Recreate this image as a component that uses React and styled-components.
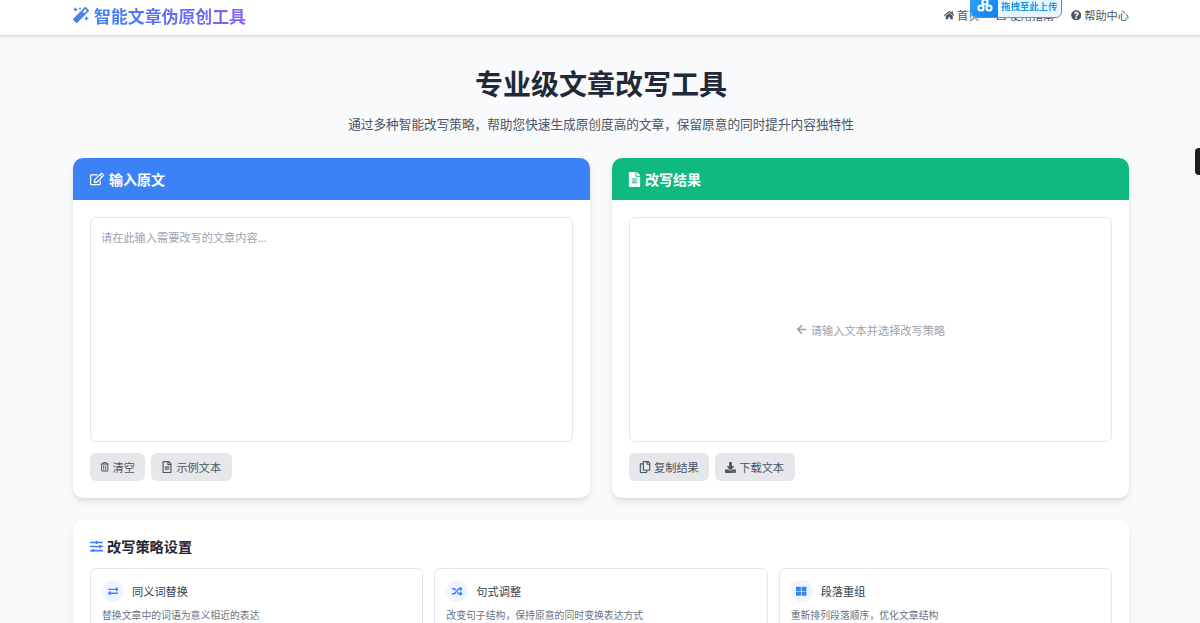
import React from "react";
import styled, { createGlobalStyle } from "styled-components";
import {
  FaMagic,
  FaHome,
  FaBook,
  FaQuestionCircle,
  FaRegEdit,
  FaFileAlt,
  FaRegTrashAlt,
  FaRegFileAlt,
  FaRegCopy,
  FaDownload,
  FaSlidersH,
  FaExchangeAlt,
  FaRandom,
  FaThLarge,
  FaArrowLeft,
} from "react-icons/fa";

const GlobalStyle = createGlobalStyle`
  html, body {
    margin: 0;
    height: 100%;
    overflow: hidden;
    background: #f8fafc;
    font-family: "Noto Sans CJK SC", "Liberation Sans", sans-serif;
    color: #1f2937;
  }
  * { box-sizing: border-box; }
`;

const Header = styled.header`
  height: 35px;
  background: #fff;
  box-shadow: 0 1px 3px rgba(0, 0, 0, 0.2);
  padding: 0 71px 5px 73px;
  display: flex;
  align-items: center;
  justify-content: space-between;
`;

const Logo = styled.div`
  display: flex;
  align-items: center;
  gap: 5px;
  font-size: 16.9px;
  font-weight: 700;
  svg {
    color: #4a80ea;
    font-size: 16px;
  }
`;

const LogoText = styled.span`
  background: linear-gradient(90deg, #3b82f6, #8b5cf6);
  -webkit-background-clip: text;
  background-clip: text;
  color: transparent;
`;

const Nav = styled.nav`
  display: flex;
  gap: 16.5px;
`;

const NavLink = styled.a`
  display: flex;
  align-items: center;
  gap: 3px;
  font-size: 11.2px;
  color: #4b5563;
  svg {
    font-size: 10.5px;
  }
`;

const UploadWidget = styled.div`
  position: fixed;
  top: -10px;
  left: 970px;
  width: 92px;
  height: 28px;
  display: flex;
  border: 1px solid #2f9df4;
  border-radius: 6px;
  overflow: hidden;
  background: #e9f5fe;
`;

const UploadIcon = styled.div`
  width: 27px;
  background: linear-gradient(135deg, #2fa8fb, #0f7fee);
  display: flex;
  align-items: flex-end;
  justify-content: center;
  padding-bottom: 5px;
`;

const UploadText = styled.div`
  flex: 1;
  display: flex;
  align-items: flex-end;
  justify-content: center;
  padding-bottom: 4px;
  font-size: 9.4px;
  line-height: 14px;
  font-weight: 700;
  color: #1a96ee;
`;

const Main = styled.main`
  padding: 0 71px 0 73px;
`;

const Hero = styled.div`
  text-align: center;
  padding-top: 28px;
`;

const Title = styled.h1`
  margin: 0;
  font-size: 28px;
  line-height: 40px;
  font-weight: 700;
  color: #1f2937;
`;

const Subtitle = styled.p`
  margin: 11px 0 0;
  font-size: 12.65px;
  line-height: 20px;
  color: #4b5563;
`;

const Columns = styled.div`
  display: grid;
  grid-template-columns: 517px 517px;
  gap: 22px;
  margin-top: 24px;
`;

const Card = styled.section`
  height: 340px;
  background: #fff;
  border-radius: 10px;
  overflow: hidden;
  box-shadow: 0 4px 8px -1px rgba(0, 0, 0, 0.1), 0 2px 4px -1px rgba(0, 0, 0, 0.06);
`;

const CardHead = styled.div`
  height: 42px;
  padding: 0 17px 0 ${(p) => p.$pad}px;
  display: flex;
  align-items: center;
  gap: ${(p) => p.$gap}px;
  background: ${(p) => p.$color};
  color: #fff;
  font-size: 14px;
  font-weight: 700;
  svg {
    font-size: ${(p) => p.$icon}px;
  }
`;

const CardBody = styled.div`
  padding: 17px;
`;

const Input = styled.textarea`
  display: block;
  width: 100%;
  height: 225px;
  padding: 10px;
  border: 1px solid #e5e7eb;
  border-radius: 6px;
  resize: none;
  outline: none;
  font-family: inherit;
  font-size: 11.2px;
  line-height: 18px;
  &::placeholder {
    color: #9ca3af;
  }
`;

const Output = styled.div`
  height: 225px;
  border: 1px solid #e5e7eb;
  border-radius: 6px;
  display: flex;
  align-items: center;
  justify-content: center;
  gap: 4px;
  font-size: 11.2px;
  color: #9ca3af;
  svg {
    font-size: 11px;
  }
`;

const Actions = styled.div`
  display: flex;
  gap: 6px;
  margin-top: 11px;
`;

const Button = styled.button`
  height: 28px;
  padding: 0 10.5px 0 10px;
  display: flex;
  align-items: center;
  gap: 3px;
  border: 0;
  border-radius: 6px;
  background: #e5e7eb;
  color: #4b5563;
  font-family: inherit;
  font-size: 11.2px;
  svg {
    font-size: ${(p) => p.$icon}px;
  }
`;

const Settings = styled.section`
  margin-top: 22px;
  padding: 16px 17px 17px;
  background: #fff;
  border-radius: 10px;
  box-shadow: 0 4px 8px -1px rgba(0, 0, 0, 0.1);
`;

const SettingsTitle = styled.h2`
  margin: 0;
  display: flex;
  align-items: center;
  gap: 4px;
  font-size: 14.2px;
  line-height: 20px;
  font-weight: 700;
  color: #1f2937;
  svg {
    color: #3b82f6;
    font-size: 13px;
  }
`;

const Strategies = styled.div`
  display: grid;
  grid-template-columns: repeat(3, 1fr);
  gap: 11px;
  margin-top: 12px;
`;

const Strategy = styled.div`
  height: 100px;
  padding: 11px;
  border: 1px solid #e5e7eb;
  border-radius: 6px;
`;

const StrategyHead = styled.div`
  display: flex;
  align-items: center;
  gap: 8px;
  font-size: 11.2px;
  color: #374151;
`;

const IconCircle = styled.span`
  width: 22px;
  height: 22px;
  border-radius: 50%;
  background: #eff4fe;
  color: #3b82f6;
  display: flex;
  align-items: center;
  justify-content: center;
  font-size: 10.5px;
`;

const StrategyDesc = styled.p`
  margin: 6px 0 0;
  font-size: 9.85px;
  line-height: 14px;
  color: #6b7280;
`;

const SidePill = styled.div`
  position: fixed;
  right: 0;
  top: 148px;
  width: 5px;
  height: 27px;
  background: #1f1f1f;
  border-radius: 4px 0 0 4px;
`;

const strategies = [
  { icon: <FaExchangeAlt />, name: "同义词替换", desc: "替换文章中的词语为意义相近的表达" },
  { icon: <FaRandom />, name: "句式调整", desc: "改变句子结构，保持原意的同时变换表达方式" },
  { icon: <FaThLarge />, name: "段落重组", desc: "重新排列段落顺序，优化文章结构" },
];

export default function App() {
  return (
    <>
      <GlobalStyle />
      <Header>
        <Logo>
          <FaMagic />
          <LogoText>智能文章伪原创工具</LogoText>
        </Logo>
        <Nav>
          <NavLink><FaHome />首页</NavLink>
          <NavLink><FaBook />使用指南</NavLink>
          <NavLink><FaQuestionCircle />帮助中心</NavLink>
        </Nav>
      </Header>
      <UploadWidget>
        <UploadIcon>
          <svg width="16" height="14" viewBox="0 0 16 14" fill="none" stroke="#fff" strokeWidth="2">
            <circle cx="8" cy="4" r="2.6" />
            <circle cx="4" cy="10" r="2.6" />
            <circle cx="12" cy="10" r="2.6" />
          </svg>
        </UploadIcon>
        <UploadText>拖拽至此上传</UploadText>
      </UploadWidget>
      <SidePill />
      <Main>
        <Hero>
          <Title>专业级文章改写工具</Title>
          <Subtitle>通过多种智能改写策略，帮助您快速生成原创度高的文章，保留原意的同时提升内容独特性</Subtitle>
        </Hero>
        <Columns>
          <Card>
            <CardHead $color="#3b82f6" $pad={17} $gap={5} $icon={14}><FaRegEdit />输入原文</CardHead>
            <CardBody>
              <Input placeholder="请在此输入需要改写的文章内容..." />
              <Actions>
                <Button $icon={9.5}><FaRegTrashAlt />清空</Button>
                <Button $icon={12}><FaRegFileAlt />示例文本</Button>
              </Actions>
            </CardBody>
          </Card>
          <Card>
            <CardHead $color="#10b981" $pad={15} $gap={3} $icon={15}><FaFileAlt />改写结果</CardHead>
            <CardBody>
              <Output><FaArrowLeft />请输入文本并选择改写策略</Output>
              <Actions>
                <Button $icon={12}><FaRegCopy />复制结果</Button>
                <Button $icon={11}><FaDownload />下载文本</Button>
              </Actions>
            </CardBody>
          </Card>
        </Columns>
        <Settings>
          <SettingsTitle><FaSlidersH />改写策略设置</SettingsTitle>
          <Strategies>
            {strategies.map((s) => (
              <Strategy key={s.name}>
                <StrategyHead>
                  <IconCircle>{s.icon}</IconCircle>
                  {s.name}
                </StrategyHead>
                <StrategyDesc>{s.desc}</StrategyDesc>
              </Strategy>
            ))}
          </Strategies>
        </Settings>
      </Main>
    </>
  );
}
